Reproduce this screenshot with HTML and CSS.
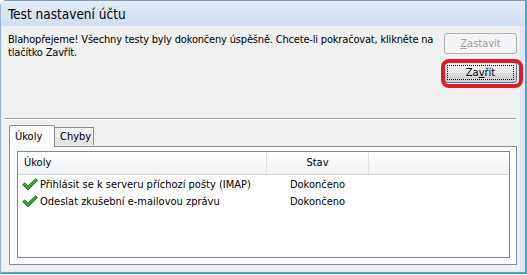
FILE: index.html
```html
<!DOCTYPE html>
<html lang="cs">
<head>
    <meta charset="UTF-8">
    <title>Test nastavení účtu</title>
    <link rel="stylesheet" href="styles.css">
</head>
<body>
    <div class="window">
        <div class="titlebar">Test nastavení účtu</div>
        <div class="client">
            <div class="top">
                <p class="message">Blahopřejeme! Všechny testy byly dokončeny úspěšně. Chcete-li pokračovat, klikněte na<br>tlačítko Zavřít.</p>
                <div class="buttons">
                    <button class="btn" disabled><u>Z</u>astavit</button>
                    <div class="highlight">
                        <button class="btn default">Za<u>v</u>řít</button>
                    </div>
                </div>
            </div>
            <div class="separator"></div>
            <div class="tabs">
                <div class="tab active">Úkoly</div>
                <div class="tab">Chyby</div>
            </div>
            <div class="panel">
                <div class="list">
                    <div class="list-head">
                        <div class="col-task">Úkoly</div>
                        <div class="col-state">Stav</div>
                        <div class="col-rest"></div>
                    </div>
                    <div class="row">
                        <div class="col-task">
                            <svg class="check" width="16" height="13" viewBox="0 0 16 13"><path d="M0.8 6.6 L2.8 4.9 L5.9 8.2 L13.8 0.8 L15.4 2.4 L5.9 11.9 Z" fill="#3faa3c" stroke="#19661b" stroke-width="1" stroke-linejoin="round"/></svg>
                            Přihlásit se k serveru příchozí pošty (IMAP)
                        </div>
                        <div class="col-state">Dokončeno</div>
                    </div>
                    <div class="row">
                        <div class="col-task">
                            <svg class="check" width="16" height="13" viewBox="0 0 16 13"><path d="M0.8 6.6 L2.8 4.9 L5.9 8.2 L13.8 0.8 L15.4 2.4 L5.9 11.9 Z" fill="#3faa3c" stroke="#19661b" stroke-width="1" stroke-linejoin="round"/></svg>
                            Odeslat zkušební e-mailovou zprávu
                        </div>
                        <div class="col-state">Dokončeno</div>
                    </div>
                </div>
            </div>
        </div>
    </div>
</body>
</html>
```

FILE: styles.css
```css
body {
    margin: 0;
    background: #ffffff;
    font-family: "DejaVu Sans Condensed", "Liberation Sans", sans-serif;
    font-size: 11px;
    color: #000;
}
.window {
    width: 527px;
    height: 274px;
    box-sizing: border-box;
    display: flex;
    flex-direction: column;
    background: #dce8f5;
    border-top: 1px solid #7f9cbd;
    border-left: 1px solid #9bb5d3;
    border-right: 2px solid #46a6dc;
    border-bottom: 2px solid #46a6dc;
    border-radius: 6px 0 0 0;
}
.titlebar {
    height: 25px;
    line-height: 27px;
    padding-left: 7px;
    font-size: 13.5px;
    background: linear-gradient(#e4edf8, #cfdef0);
}
.client {
    flex: 1;
    margin: 0 5px 1px 1px;
    background: #f0f0f0;
}
.top {
    height: 92px;
    display: flex;
    justify-content: space-between;
    box-sizing: border-box;
    padding: 7px 3px 0 6px;
}
.message {
    margin: 0;
    line-height: 13px;
    white-space: nowrap;
    letter-spacing: -0.18px;
}
.buttons {
    display: flex;
    flex-direction: column;
    gap: 8px;
}
.btn {
    width: 73px;
    height: 21px;
    padding: 0;
    font-family: inherit;
    font-size: 11px;
    color: #000;
    border: 1px solid #707070;
    border-radius: 3px;
    background: linear-gradient(#f2f2f2 0%, #ebebeb 50%, #dddddd 51%, #cfcfcf 100%);
}
.btn[disabled] {
    color: #a0a0a0;
    border-color: #adb2b5;
    background: #f4f4f4;
}
.btn.default {
    border-color: #3c7fb1;
    outline: 1px dotted #000;
    outline-offset: -4px;
}
.highlight {
    position: relative;
}
.highlight::after {
    content: "";
    position: absolute;
    left: -3px;
    right: -6px;
    top: -3px;
    bottom: -5px;
    border: 4px solid #e01b26;
    border-radius: 8px;
}
.separator {
    height: 1px;
    margin: 0 4px 0 3px;
    background: #a0a0a0;
    border-bottom: 1px solid #ffffff;
}
.tabs {
    display: flex;
    align-items: flex-end;
    margin: 3px 0 0 7px;
    height: 23px;
    position: relative;
    z-index: 1;
}
.tab {
    height: 17px;
    line-height: 17px;
    padding: 0 5px;
    border: 1px solid #898c95;
    border-bottom: none;
    background: linear-gradient(#f3f3f3, #e3e3e3);
    margin-bottom: 1px;
}
.tab.active {
    height: 21px;
    line-height: 21px;
    width: 34px;
    padding: 0 5px;
    background: #fcfcfc;
    margin-bottom: -1px;
    border-radius: 2px 2px 0 0;
}
.tab + .tab {
    border-left: none;
    width: 28px;
}
.panel {
    margin-left: 7px;
    width: 508px;
    height: 119px;
    box-sizing: border-box;
    border: 1px solid #898c95;
    background: #fcfcfc;
    padding: 4px 6px 6px 7px;
}
.list {
    height: 107px;
    box-sizing: border-box;
    border: 1px solid #828790;
    background: #ffffff;
}
.list-head {
    display: flex;
    height: 23px;
    line-height: 22px;
    box-sizing: border-box;
    border-bottom: 1px solid #d5d5d5;
    background: linear-gradient(#ffffff, #f1f2f4);
    margin-bottom: 1px;
}
.list-head .col-task {
    padding-left: 6px;
    border-right: 1px solid #e2e3e5;
}
.list-head .col-state {
    border-right: 1px solid #e2e3e5;
}
.col-task {
    width: 249px;
    box-sizing: border-box;
}
.col-state {
    width: 101px;
    text-align: center;
}
.col-rest {
    flex: 1;
}
.row {
    display: flex;
    height: 17px;
    line-height: 17px;
}
.row .col-task {
    display: flex;
    align-items: center;
    gap: 2px;
    padding-left: 4px;
}
.check {
    flex: none;
}
```
